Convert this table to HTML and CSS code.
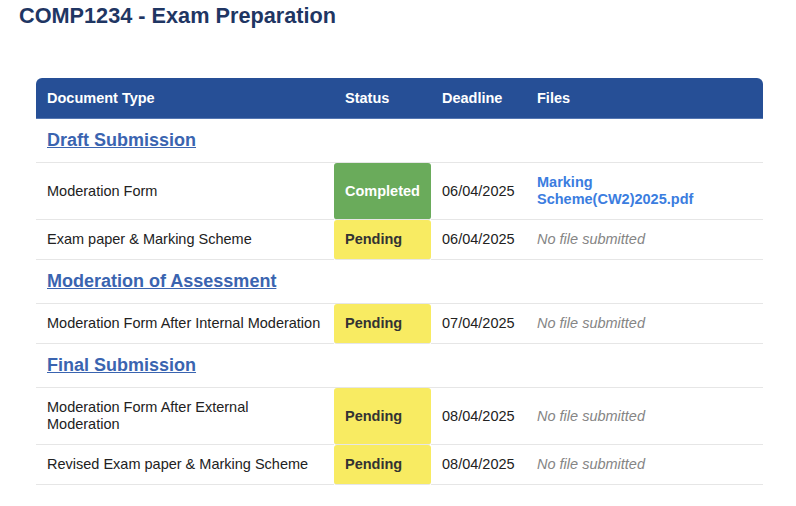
FILE: index.html
```html
<!DOCTYPE html>
<html>
<head>
    <meta charset="UTF-8">
    <title>COMP1234 - Exam Preparation</title>
    <link rel="stylesheet" href="styles.css">
</head>
<body>
    <div class="page">
        <h1 class="page-title">COMP1234 - Exam Preparation</h1>

        <!--文档列表-->
        <table class="doc-table">
            <thead>
                <tr>
                    <th class="col-type">Document Type</th>
                    <th class="col-status">Status</th>
                    <th class="col-deadline">Deadline</th>
                    <th class="col-files">Files</th>
                </tr>
            </thead>
            <tbody>
                <tr class="section">
                    <td colspan="4"><a href="#">Draft Submission</a></td>
                </tr>
                <tr>
                    <td>Moderation Form</td>
                    <td class="status done">Completed</td>
                    <td>06/04/2025</td>
                    <td class="files"><a class="file" href="#">Marking Scheme(CW2)2025.pdf</a></td>
                </tr>
                <tr>
                    <td>Exam paper &amp; Marking Scheme</td>
                    <td class="status pending">Pending</td>
                    <td>06/04/2025</td>
                    <td class="files nofile">No file submitted</td>
                </tr>
                <tr class="section">
                    <td colspan="4"><a href="#">Moderation of Assessment</a></td>
                </tr>
                <tr>
                    <td>Moderation Form After Internal Moderation</td>
                    <td class="status pending">Pending</td>
                    <td>07/04/2025</td>
                    <td class="files nofile">No file submitted</td>
                </tr>
                <tr class="section">
                    <td colspan="4"><a href="#">Final Submission</a></td>
                </tr>
                <tr>
                    <td>Moderation Form After External Moderation</td>
                    <td class="status pending">Pending</td>
                    <td>08/04/2025</td>
                    <td class="files nofile">No file submitted</td>
                </tr>
                <tr class="last">
                    <td>Revised Exam paper &amp; Marking Scheme</td>
                    <td class="status pending">Pending</td>
                    <td>08/04/2025</td>
                    <td class="files nofile">No file submitted</td>
                </tr>
            </tbody>
        </table>
    </div>
</body>
</html>
```

FILE: styles.css
```css
* {
    margin: 0;
    padding: 0;
}
body {
    font-size: 14.5px;
    font-family: "Liberation Sans", Arial, sans-serif;
    color: #222;
    background-color: #fff;
}
.page {
    padding: 3px 0 0 19px;
}
.page-title {
    font-size: 21.7px;
    line-height: 26px;
    font-weight: bold;
    color: #1f3663;
}
.doc-table {
    width: 727px;
    margin: 49px 0 0 17px;
    border-collapse: separate;
    border-spacing: 0;
    table-layout: fixed;
}
.doc-table th {
    background-color: #264f96;
    color: #fff;
    font-weight: bold;
    text-align: left;
    line-height: 18px;
    padding: 11px 11px;
    border-bottom: 1px solid #5577b2;
}
.doc-table th.col-type {
    width: 276px;
    border-top-left-radius: 6px;
}
.doc-table th.col-status {
    width: 75px;
}
.doc-table th.col-deadline {
    width: 73px;
}
.doc-table th.col-files {
    border-top-right-radius: 6px;
}
.doc-table td {
    line-height: 17px;
    padding: 11px 11px;
    border-bottom: 1px solid #e6e6e6;
    vertical-align: middle;
}
.doc-table td.files {
    padding-right: 40px;
}
.doc-table tr.section td {
    font-size: 18px;
    line-height: 21px;
    padding: 11px 11px;
}
.doc-table tr.section a {
    font-weight: bold;
    color: #3a64b0;
}
.doc-table td.status {
    font-weight: bold;
    border-radius: 3px;
}
.doc-table td.done {
    background-color: #6aab5b;
    color: #fff;
}
.doc-table td.pending {
    background-color: #f8eb62;
    color: #333;
}
.doc-table a.file {
    color: #3b7ddf;
    font-weight: bold;
    text-decoration: none;
}
.doc-table td.nofile {
    color: #858585;
    font-style: italic;
}
```
